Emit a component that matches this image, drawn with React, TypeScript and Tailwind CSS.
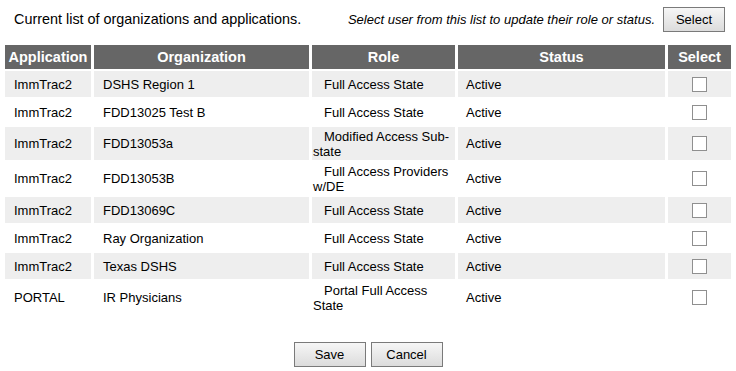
type Row = {
  app: string;
  org: string;
  role: string;
  tall?: boolean;
};

const rows: Row[] = [
  { app: "ImmTrac2", org: "DSHS Region 1", role: "Full Access State" },
  { app: "ImmTrac2", org: "FDD13025 Test B", role: "Full Access State" },
  { app: "ImmTrac2", org: "FDD13053a", role: "Modified Access Sub-state", tall: true },
  { app: "ImmTrac2", org: "FDD13053B", role: "Full Access Providers w/DE", tall: true },
  { app: "ImmTrac2", org: "FDD13069C", role: "Full Access State" },
  { app: "ImmTrac2", org: "Ray Organization", role: "Full Access State" },
  { app: "ImmTrac2", org: "Texas DSHS", role: "Full Access State" },
  { app: "PORTAL", org: "IR Physicians", role: "Portal Full Access State", tall: true },
];

const btn =
  "h-[25px] border border-[#7a7a7a] bg-gradient-to-b from-[#f6f6f6] to-[#dcdcdc] text-[13px] text-black";

export default function App() {
  return (
    <div className="w-[736px] h-[371px] bg-white font-['Liberation_Sans',Arial,sans-serif] text-[13px] text-black">
      <div className="flex items-center justify-between pt-[7px] pr-[11px]">
        <p className="pl-[14px] text-[14.4px]">Current list of organizations and applications.</p>
        <div className="flex items-center gap-[8px]">
          <p className="italic">Select user from this list to update their role or status.</p>
          <button className={`${btn} w-[62px]`}>Select</button>
        </div>
      </div>

      <table className="mt-[11px] ml-[2px] w-[732px] table-fixed border-separate border-spacing-x-[3px] border-spacing-y-[2px] leading-[15px]">
        <colgroup>
          <col className="w-[86px]" />
          <col className="w-[215px]" />
          <col className="w-[143px]" />
          <col className="w-[207px]" />
          <col className="w-[63px]" />
        </colgroup>
        <thead>
          <tr className="h-[24px] bg-[#666666] text-[14.5px] font-bold text-white">
            <th className="p-0 text-center">Application</th>
            <th className="p-0 text-center">Organization</th>
            <th className="p-0 text-center">Role</th>
            <th className="p-0 text-center">Status</th>
            <th className="p-0 text-center">Select</th>
          </tr>
        </thead>
        <tbody>
          {rows.map((r, i) => (
            <tr
              key={r.org}
              className={`${r.tall ? "h-[33px]" : "h-[26px]"} ${i % 2 === 0 ? "bg-[#eeeeee]" : "bg-white"}`}
            >
              <td className="pl-[9px] align-middle">{r.app}</td>
              <td className="pl-[9px] align-middle">{r.org}</td>
              <td className="pl-[1px] pr-0 indent-[11px] align-middle">{r.role}</td>
              <td className="pl-[8px] align-middle">Active</td>
              <td className="align-middle">
                <span className="mx-auto block h-[15px] w-[15px] border border-[#8f8f8f] bg-white" />
              </td>
            </tr>
          ))}
        </tbody>
      </table>

      <div className="mt-[26px] flex justify-center gap-[5px]">
        <button className={`${btn} w-[72px]`}>Save</button>
        <button className={`${btn} w-[72px]`}>Cancel</button>
      </div>
    </div>
  );
}
